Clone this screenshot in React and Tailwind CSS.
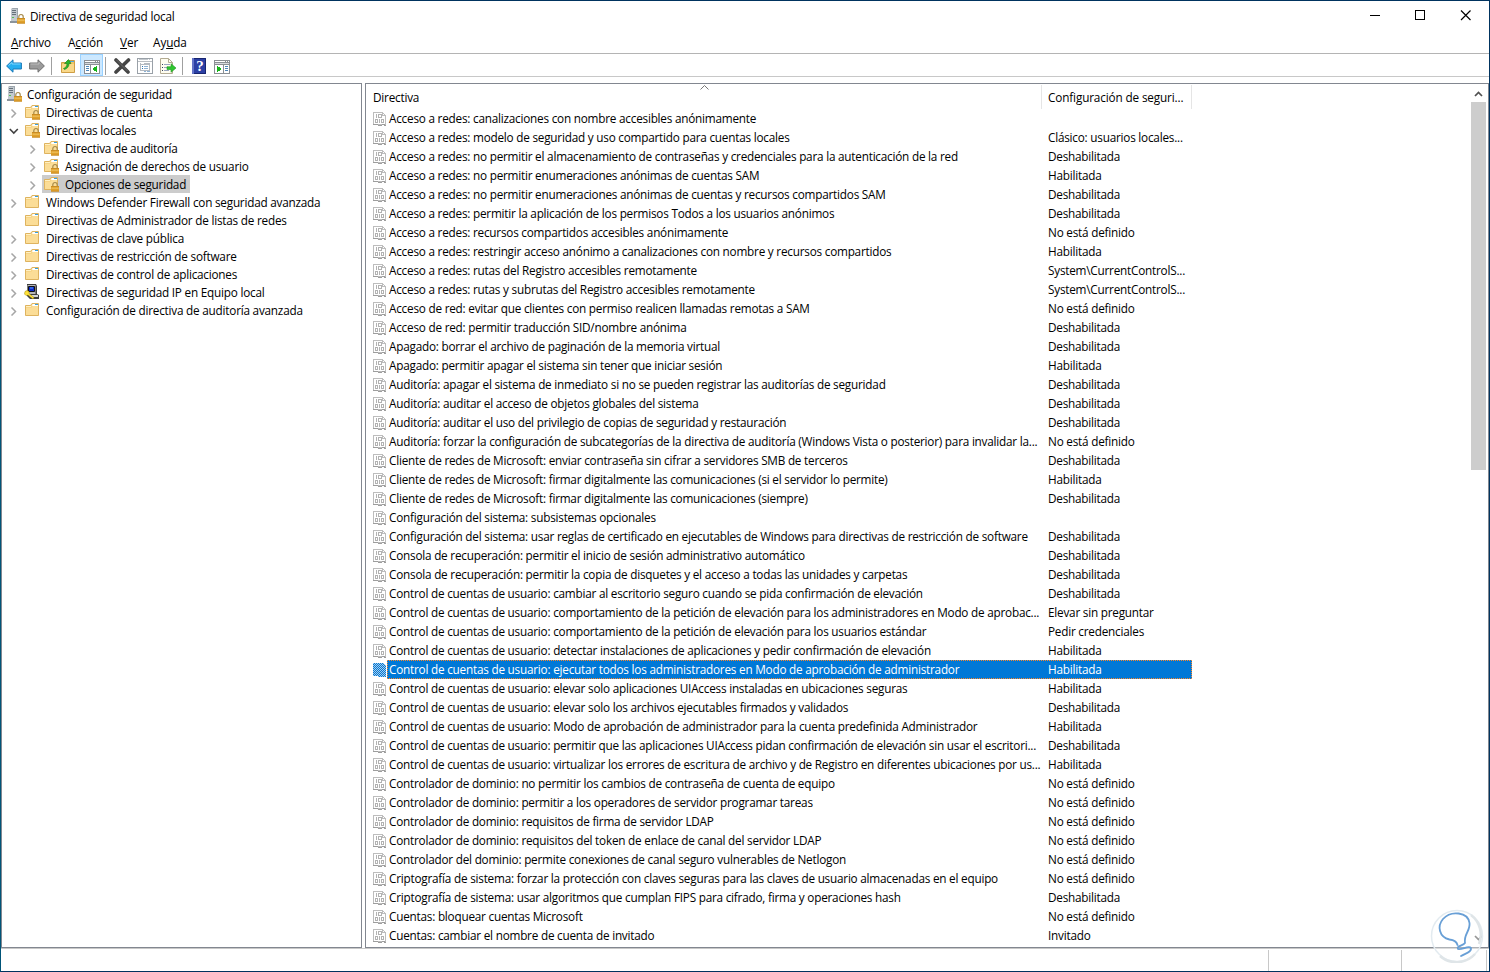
import clsx from "clsx";

const tree = [
  { label: "Directivas de cuenta", icon: "lock", level: 0, arrow: "closed" },
  { label: "Directivas locales", icon: "lock", level: 0, arrow: "open" },
  { label: "Directiva de auditoría", icon: "lock", level: 1, arrow: "closed" },
  { label: "Asignación de derechos de usuario", icon: "lock", level: 1, arrow: "closed" },
  { label: "Opciones de seguridad", icon: "lock", level: 1, arrow: "closed", selected: true },
  { label: "Windows Defender Firewall con seguridad avanzada", icon: "folder", level: 0, arrow: "closed" },
  { label: "Directivas de Administrador de listas de redes", icon: "folder", level: 0 },
  { label: "Directivas de clave pública", icon: "folder", level: 0, arrow: "closed" },
  { label: "Directivas de restricción de software", icon: "folder", level: 0, arrow: "closed" },
  { label: "Directivas de control de aplicaciones", icon: "folder", level: 0, arrow: "closed" },
  { label: "Directivas de seguridad IP en Equipo local", icon: "ip", level: 0, arrow: "closed" },
  { label: "Configuración de directiva de auditoría avanzada", icon: "folder", level: 0, arrow: "closed" },
];

const ON = "Habilitada";
const OFF = "Deshabilitada";
const NONE = "No está definido";

const policies = [
  ["Acceso a redes: canalizaciones con nombre accesibles anónimamente", ""],
  ["Acceso a redes: modelo de seguridad y uso compartido para cuentas locales", "Clásico: usuarios locales..."],
  ["Acceso a redes: no permitir el almacenamiento de contraseñas y credenciales para la autenticación de la red", OFF],
  ["Acceso a redes: no permitir enumeraciones anónimas de cuentas SAM", ON],
  ["Acceso a redes: no permitir enumeraciones anónimas de cuentas y recursos compartidos SAM", OFF],
  ["Acceso a redes: permitir la aplicación de los permisos Todos a los usuarios anónimos", OFF],
  ["Acceso a redes: recursos compartidos accesibles anónimamente", NONE],
  ["Acceso a redes: restringir acceso anónimo a canalizaciones con nombre y recursos compartidos", ON],
  ["Acceso a redes: rutas del Registro accesibles remotamente", "System\\CurrentControlS..."],
  ["Acceso a redes: rutas y subrutas del Registro accesibles remotamente", "System\\CurrentControlS..."],
  ["Acceso de red: evitar que clientes con permiso realicen llamadas remotas a SAM", NONE],
  ["Acceso de red: permitir traducción SID/nombre anónima", OFF],
  ["Apagado: borrar el archivo de paginación de la memoria virtual", OFF],
  ["Apagado: permitir apagar el sistema sin tener que iniciar sesión", ON],
  ["Auditoría: apagar el sistema de inmediato si no se pueden registrar las auditorías de seguridad", OFF],
  ["Auditoría: auditar el acceso de objetos globales del sistema", OFF],
  ["Auditoría: auditar el uso del privilegio de copias de seguridad y restauración", OFF],
  ["Auditoría: forzar la configuración de subcategorías de la directiva de auditoría (Windows Vista o posterior) para invalidar la...", NONE],
  ["Cliente de redes de Microsoft: enviar contraseña sin cifrar a servidores SMB de terceros", OFF],
  ["Cliente de redes de Microsoft: firmar digitalmente las comunicaciones (si el servidor lo permite)", ON],
  ["Cliente de redes de Microsoft: firmar digitalmente las comunicaciones (siempre)", OFF],
  ["Configuración del sistema: subsistemas opcionales", ""],
  ["Configuración del sistema: usar reglas de certificado en ejecutables de Windows para directivas de restricción de software", OFF],
  ["Consola de recuperación: permitir el inicio de sesión administrativo automático", OFF],
  ["Consola de recuperación: permitir la copia de disquetes y el acceso a todas las unidades y carpetas", OFF],
  ["Control de cuentas de usuario: cambiar al escritorio seguro cuando se pida confirmación de elevación", OFF],
  ["Control de cuentas de usuario: comportamiento de la petición de elevación para los administradores en Modo de aprobac...", "Elevar sin preguntar"],
  ["Control de cuentas de usuario: comportamiento de la petición de elevación para los usuarios estándar", "Pedir credenciales"],
  ["Control de cuentas de usuario: detectar instalaciones de aplicaciones y pedir confirmación de elevación", ON],
  ["Control de cuentas de usuario: ejecutar todos los administradores en Modo de aprobación de administrador", ON],
  ["Control de cuentas de usuario: elevar solo aplicaciones UIAccess instaladas en ubicaciones seguras", ON],
  ["Control de cuentas de usuario: elevar solo los archivos ejecutables firmados y validados", OFF],
  ["Control de cuentas de usuario: Modo de aprobación de administrador para la cuenta predefinida Administrador", ON],
  ["Control de cuentas de usuario: permitir que las aplicaciones UIAccess pidan confirmación de elevación sin usar el escritori...", OFF],
  ["Control de cuentas de usuario: virtualizar los errores de escritura de archivo y de Registro en diferentes ubicaciones por us...", ON],
  ["Controlador de dominio: no permitir los cambios de contraseña de cuenta de equipo", NONE],
  ["Controlador de dominio: permitir a los operadores de servidor programar tareas", NONE],
  ["Controlador de dominio: requisitos de firma de servidor LDAP", NONE],
  ["Controlador de dominio: requisitos del token de enlace de canal del servidor LDAP", NONE],
  ["Controlador del dominio: permite conexiones de canal seguro vulnerables de Netlogon", NONE],
  ["Criptografía de sistema: forzar la protección con claves seguras para las claves de usuario almacenadas en el equipo", NONE],
  ["Criptografía de sistema: usar algoritmos que cumplan FIPS para cifrado, firma y operaciones hash", OFF],
  ["Cuentas: bloquear cuentas Microsoft", NONE],
  ["Cuentas: cambiar el nombre de cuenta de invitado", "Invitado"],
];

const SELECTED = 29;

function Padlock() {
  return (
    <g>
      <path d="M9.800 10.500V8.700a2.200 2.200 0 0 1 4.400 0v1.800" fill="none" stroke="#a58a4c" strokeWidth="1.200" />
      <rect x="8" y="10" width="8" height="5.500" fill="#dfa02c" />
      <path d="M8 10.500h8M8 15.200h8" stroke="#c0841f" strokeWidth=".7" />
      <path d="M8.500 12.200h7" stroke="#f0c463" strokeWidth="1" />
    </g>
  );
}

function ServerIcon() {
  return (
    <svg width="16" height="16" viewBox="0 0 16 16" className="shrink-0">
      <path d="M2 1 3.500 0H9v13H2z" fill="#9da6ae" />
      <path d="M2 1h6v13H2z" fill="#c3cad0" />
      <path d="M3 2.500h4M3 4.500h4M3 6.500h4" stroke="#65717b" />
      <path d="M1 13h7v2H1z" fill="#8b949b" />
      <rect x="3" y="9" width="2" height="1" fill="#54c254" />
      <Padlock />
    </svg>
  );
}

function FolderIcon({ locked }) {
  return (
    <svg width="16" height="16" viewBox="0 0 16 16" className="shrink-0">
      <path d="M1.500 13.500V3.500h5l1.500-2h6.500v12z" fill="#f3cb74" stroke="#deb35f" />
      <path d="M8.500 2h5.500v2h-6z" fill="#fff" />
      <path d="M11 2.500h3" stroke="#3aa0dc" />
      <path d="M2 5.500h5.500l1-1.500H14v9H2z" fill="#fbdd97" />
      <path d="M2 4.500h5l1-1" fill="none" stroke="#fff0c2" />
      {locked && <Padlock />}
    </svg>
  );
}

function IpIcon() {
  return (
    <svg width="16" height="16" viewBox="0 0 16 16" className="shrink-0">
      <path d="M3 0h9l1 2v8l2 1v4H6l-3-3z" fill="#3d3d3d" />
      <path d="M3.500 1h8v9h-8z" fill="#b7b7b7" />
      <path d="M4.500 2.500h6v5h-6z" fill="#0827c8" stroke="#111" />
      <path d="M6 4h3" stroke="#58a2ff" />
      <path d="M6 11h8v2H6z" fill="#d4d4d4" />
      <path d="m1 7.500 2-1 2 1v2l5 4-1 1.500-5-4-2 .5L.5 10z" fill="#ffe13a" stroke="#9b8700" strokeWidth=".5" />
    </svg>
  );
}

function PolicyIcon({ selected }) {
  return (
    <svg width="14" height="16" viewBox="0 0 14 16" shapeRendering="crispEdges" className="shrink-0">
      <path d="M0 1h10v1h1v1h1v1h1v11h-2v-1h-2v1H5v-1H0z" fill="#bdbdbd" />
      <path d="M1 2h8v3h3v8H1z" fill="#fff" />
      <path d="M10 3h1v1h-1z" fill="#fff" />
      <path d="M3 3h1v4H3zM6 3h2v1H6zM6 6h2v1H6zM5 3h1v4H5zM8 3h1v4H8z" fill="#b2b2b2" />
      <path d="M2 8h3v1H2zM2 11h3v1H2zM2 8h1v4H2zM4 8h1v4H4zM6 8h1v4H6zM8 8h3v1H8zM8 11h3v1H8zM8 8h1v4H8zM10 8h1v4h-1z" fill="#b2b2b2" />
      <path d="M0 13h5v1h4v-1h3v1h1v1h-2v-1H9v1H5v-1H0z" fill="#9d9d9d" />
      {selected && (
        <>
          <defs>
            <pattern id="dither" width="2" height="2" patternUnits="userSpaceOnUse">
              <path d="M0 0h1v1H0zM1 1h1v1H1z" fill="#0078d7" />
            </pattern>
          </defs>
          <path d="M0 1h10l3 3v11H5v-1H0z" fill="#a9cdea" />
          <path d="M0 1h10l3 3v11H5v-1H0z" fill="url(#dither)" />
        </>
      )}
    </svg>
  );
}

function Arrow({ state }) {
  return (
    <svg width="10" height="10" viewBox="0 0 10 10" className="mt-px shrink-0">
      {state === "closed" && <path d="m2.500 1.500 4 4-4 4" fill="none" stroke="#a6a6a6" strokeWidth="1.500" />}
      {state === "open" && <path d="m.800 3 4 4 4-4" fill="none" stroke="#404040" strokeWidth="1.600" />}
    </svg>
  );
}

function Divider() {
  return <div className="h-[18px] w-px bg-[#a0a0a0]" />;
}

function WindowPane({ flip }) {
  return (
    <svg width="16" height="14" viewBox="0 1 16 14" shapeRendering="crispEdges">
      <path d="M0 1h16v14H0z" fill="#8b8f94" />
      <path d="M1 2h10v1H1zM12 2h1v1h-1zM14 2h1v1h-1z" fill="#fff" />
      <path d="M1 4h14v1H1z" fill="#d8dadd" />
      <path d="M1 6h14v8H1z" fill="#fff" />
      {flip ? (
        <>
          <path d="M9 5h1v9H9z" fill="#8b8f94" />
          <path d="M11 7h3v1h-3zM11 9h3v1h-3zM11 11h3v1h-3z" fill="#4d86b8" />
          <path d="m3 6.500 4.500 3.500L3 13.500z" fill="#17b51a" />
        </>
      ) : (
        <>
          <path d="M6 5h1v9H6z" fill="#8b8f94" />
          <path d="M2 7h3v1H2zM2 9h3v1H2zM2 11h3v1H2z" fill="#4d86b8" />
          <path d="M13 6.500 8.500 10l4.500 3.500z" fill="#17b51a" />
        </>
      )}
    </svg>
  );
}

function Toolbar() {
  return (
    <div className="flex h-6 shrink-0 items-center border-y border-t-[#b4b4b4] border-b-[#c8c8c8] pt-[2px] pl-[5px]">
      <svg width="16" height="16" viewBox="0 0 16 16">
        <path d="M.6 8 7 1.800v3.200h8.400v6H7v3.200z" fill="#25aef0" stroke="#1878b8" />
        <path d="M2.500 7.500 6 4.500V6h8.500" fill="none" stroke="#7fd6ff" />
      </svg>
      <svg width="16" height="16" viewBox="0 0 16 16" className="ml-[7px]">
        <path d="M15.400 8 9 1.800v3.200H.6v6H9v3.200z" fill="#9b9b9b" stroke="#6f6f6f" />
        <path d="M1.500 6H10V4" fill="none" stroke="#bdbdbd" />
      </svg>
      <div className="ml-[6px]"><Divider /></div>
      <svg width="16" height="16" viewBox="0 0 16 16" className="ml-2">
        <path d="M1.500 14.500v-10h5l1-2h7v12z" fill="#f0c566" stroke="#cf9e45" />
        <path d="M2 6h12v8H2z" fill="#f9d889" />
        <path d="M9 3.500h5" stroke="#4aa8df" />
        <path d="M3.500 10.500C6 9.500 7 8 7 5.500H4.500L8.500 1.500 11 5.500H9c0 3-1.500 5-4.500 6z" fill="#2bb52c" stroke="#168019" strokeWidth=".6" />
      </svg>
      <div className="-mt-[2px] ml-1 flex h-[22px] w-[23px] items-center justify-center border border-[#99d1ff] bg-[#cce8ff] pt-[3px]">
        <WindowPane />
      </div>
      <div className="ml-[2px]"><Divider /></div>
      <svg width="18" height="16" viewBox="0 0 18 16" className="ml-[7px]">
        <path d="m3 2 12 12M15.500 2 3 14" stroke="#454545" strokeWidth="3.600" strokeLinecap="round" />
        <path d="m3.500 2 11 11" stroke="#6b6b6b" />
      </svg>
      <svg width="16" height="16" viewBox="0 0 16 16" shapeRendering="crispEdges" className="ml-[6px]">
        <path d="M0 0h16v16H0z" fill="#9aa1a8" />
        <path d="M1 1h14v14H1z" fill="#fff" />
        <path d="M1 3h14v1H1z" fill="#b9bec3" />
        <path d="M2 1h9v1H2zM12 1h1v1h-1z" fill="#c4c9ce" />
        <path d="M3 5h10v8H3z" fill="#b4bac1" />
        <path d="M4 7h8v5H4zM4 5h3v1H4z" fill="#fff" />
        <path d="M5 8h1v1H5zM5 10h1v1H5z" fill="#3178b5" />
        <path d="M7 8h4v1H7zM7 10h4v1H7zM7 13h2v1H7zM10 13h3v1h-3z" fill="#8fb3d5" />
      </svg>
      <svg width="17" height="16" viewBox="0 0 17 16" className="ml-[7px]">
        <path d="M.5.5h8l4 4v11H.5z" fill="#fffdf0" stroke="#b3ab92" />
        <path d="M8.500.5v4h4" fill="none" stroke="#b3ab92" />
        <path d="M2 6.500h1M2 9.500h1M2 12.500h1" stroke="#33415a" />
        <path d="M4 6.500h6M4 9.500h4M4 12.500h5" stroke="#9aa6be" />
        <path d="M7 8.700h4V5.700l5 4.300-5 4.300v-2.800H7z" fill="#2fc62f" stroke="#219421" strokeWidth=".6" />
      </svg>
      <div className="ml-[5px]"><Divider /></div>
      <svg width="14" height="16" viewBox="0 0 14 16" className="ml-[9px]">
        <path d="M0 0h14v16H0z" fill="#2c40a4" />
        <path d="M0 0h2v16H0z" fill="#6373c7" />
        <path d="M2 .5h11.500v15H2" fill="none" stroke="#17256f" />
        <text x="8" y="13" textAnchor="middle" fill="#fff" className="font-['Liberation_Serif',serif] text-[15px] font-bold">?</text>
      </svg>
      <div className="ml-2 pt-[2px]"><WindowPane flip /></div>
    </div>
  );
}

function Tree() {
  return (
    <div className="w-[361px] shrink-0 overflow-hidden border border-[#828790] pt-px">
      <div className="flex h-[18px] items-center pl-[4px]">
        <ServerIcon />
        <span className="ml-[5px]">Configuración de seguridad</span>
      </div>
      {tree.map((item) => (
        <div key={item.label} className={clsx("flex h-[18px] items-center", item.level ? "pl-[26px]" : "pl-[7px]")}>
          <Arrow state={item.arrow} />
          <div
            className={clsx(
              "ml-[4px] flex h-[18px] items-center pr-[4px] pl-[1px]",
              item.selected && "bg-[#cccccc]"
            )}
          >
            {item.icon === "ip" ? <IpIcon /> : <FolderIcon locked={item.icon === "lock"} />}
            <span className="ml-[6px]">{item.label}</span>
          </div>
        </div>
      ))}
    </div>
  );
}

function PolicyRow({ name, value, selected }) {
  return (
    <div className="flex h-[19px] w-[826px] items-center pl-[7px]">
      <PolicyIcon selected={selected} />
      <div
        className={clsx(
          "flex h-[19px] flex-1 items-start",
          selected && "bg-[#0078d7] text-white outline-1 -outline-offset-1 outline-dotted outline-[#ff8728]"
        )}
      >
        <span className="w-[659px] pl-[2px]">{name}</span>
        <span className="pl-[2px]">{value}</span>
      </div>
    </div>
  );
}

function PolicyList() {
  return (
    <div className="flex flex-1 border border-[#828790]">
      <div className="flex-1">
        <div className="flex h-[25px] pt-px">
          <div className="relative flex h-[24px] w-[676px] items-center border-r border-[#e5e5e5] pl-[7px]">
            Directiva
            <svg width="9" height="5" viewBox="0 0 9 5" className="absolute top-0 left-[334px]">
              <path d="m.5 4.500 4-4 4 4" fill="none" stroke="#777" />
            </svg>
          </div>
          <div className="flex h-[24px] w-[150px] items-center border-r border-[#e5e5e5] pl-[6px] tracking-[-0.14px]">
            Configuración de seguri...
          </div>
        </div>
        {policies.map(([name, value], i) => (
          <PolicyRow key={name} name={name} value={value} selected={i === SELECTED} />
        ))}
      </div>
      <div className="flex w-[17px] flex-col items-start">
        <svg width="15" height="18" viewBox="0 0 15 18" className="shrink-0">
          <path d="m4 12 3.500-3.500L11 12" fill="none" stroke="#505050" strokeWidth="1.700" />
        </svg>
        <div className="h-[368px] w-[15px] bg-[#cdcdcd]" />
        <svg width="15" height="18" viewBox="0 0 15 18" className="mt-auto shrink-0">
          <path d="m4 7 3.500 3.500L11 7" fill="none" stroke="#606060" strokeWidth="1.700" />
        </svg>
      </div>
    </div>
  );
}

function Watermark() {
  return (
    <svg width="54" height="54" viewBox="0 0 54 54" className="absolute top-[908px] left-[1429px]">
      <circle cx="27" cy="27" r="25.500" fill="#fff" fillOpacity=".35" stroke="#e3ebf0" strokeWidth="1.500" />
      <path d="M41 6a25 25 0 0 1 8 29M45 45a25 25 0 0 1-35 2" fill="none" stroke="#dfe5e8" strokeWidth="2.500" />
      <path
        d="M27.500 36c-1-4-4-5-8-5.500C9 28 7 17 13 10 21 1 38 3 39.500 14c1 8-6 11-4.500 20-2 3-9 3-7 6 4 1 11-4 13-1 1 4-5 5-10 8"
        fill="none" stroke="#689fd6" strokeWidth="1.800" strokeLinejoin="round" strokeLinecap="round"
      />
    </svg>
  );
}

function App() {
  return (
    <div className="relative flex h-[972px] w-[1490px] flex-col overflow-hidden border border-[#00335f] border-l-[#005478] bg-white font-['Open_Sans','Noto_Sans',sans-serif] text-[11.75px] leading-[18px] tracking-[-0.22px] whitespace-nowrap text-black">
      <div className="flex h-[29px] shrink-0 items-center pl-2">
        <ServerIcon />
        <span className="ml-[5px]">Directiva de seguridad local</span>
        <svg width="101" height="11" viewBox="0 0 101 11" className="mr-[18px] ml-auto" shapeRendering="crispEdges">
          <path d="M0 5h10v1H0z" />
          <path d="M45.500.5h9v9h-9z" fill="none" stroke="#000" />
          <path d="m91 .5 9.500 9.500M100.500.5 91 10" stroke="#000" strokeWidth="1.200" shapeRendering="auto" />
        </svg>
      </div>
      <div className="flex h-[23px] shrink-0 items-center pl-[10px] tracking-[-0.14px]">
        <span><u>A</u>rchivo</span>
        <span className="ml-[17px]">A<u>c</u>ción</span>
        <span className="ml-[17px]"><u>V</u>er</span>
        <span className="ml-[15px]">Ay<u>u</u>da</span>
      </div>
      <Toolbar />
      <div className="mt-[6px] flex h-[865px] shrink-0 gap-[3px]">
        <Tree />
        <PolicyList />
      </div>
      <div className="flex flex-1 justify-end border-t border-[#c8c8c8] pt-px">
        <div className="w-[133px] border-l border-[#c8c8c8]" />
        <div className="w-[86px] border-x border-[#c8c8c8]" />
        <div className="w-[2px]" />
      </div>
      <Watermark />
    </div>
  );
}

export default App;
